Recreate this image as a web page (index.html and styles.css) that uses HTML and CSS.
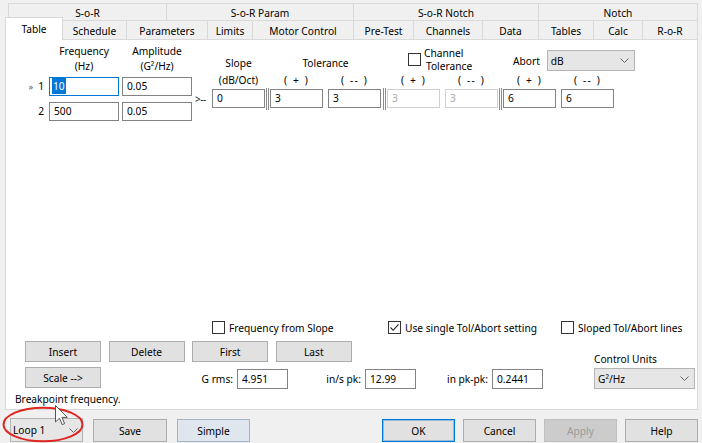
FILE: index.html
```html
<!DOCTYPE html>
<html lang="en">
<head>
<meta charset="utf-8">
<title>Table</title>
<link rel="stylesheet" href="styles.css">
</head>
<body>
<div class="dlg">
  <div class="tabs">
    <div class="trow trow1">
      <div class="tab t-sor">S-o-R</div>
      <div class="tab t-sorp">S-o-R Param</div>
      <div class="tab t-sorn">S-o-R Notch</div>
      <div class="tab t-notch">Notch</div>
    </div>
    <div class="trow trow2">
      <div class="tab sel t-table">Table</div>
      <div class="tab t-sched">Schedule</div>
      <div class="tab t-param">Parameters</div>
      <div class="tab t-limits">Limits</div>
      <div class="tab t-motor">Motor Control</div>
      <div class="tab t-pre">Pre-Test</div>
      <div class="tab t-chan">Channels</div>
      <div class="tab t-data">Data</div>
      <div class="tab t-tables">Tables</div>
      <div class="tab t-calc">Calc</div>
      <div class="tab t-ror">R-o-R</div>
    </div>
  </div>

  <div class="panel">
    <div class="tarea">
      <div class="freq">
        <div class="fhead">
          <div class="fh">Frequency<br>(Hz)</div>
          <div class="fh amp">Amplitude<br>(G²/Hz)</div>
        </div>
        <div class="frow">
          <div class="rl"><span class="cur">»</span>1</div>
          <div class="tb fcol focus"><span class="hl">10</span></div>
          <div class="tb fcol amp">0.05</div>
        </div>
        <div class="frow r2">
          <div class="rl">2</div>
          <div class="tb fcol">500</div>
          <div class="tb fcol amp">0.05</div>
        </div>
      </div>
      <div class="conn">&gt;--</div>
      <div class="tgrid">
        <div class="gl r1 c1">Slope</div>
        <div class="gl r1 c3s">Tolerance</div>
        <div class="chtol r1 c7s"><span class="cb"></span><span class="chtxt"><span class="ln">Channel</span><span class="ln">Tolerance</span></span></div>
        <div class="abort r1 c11s">
          <span class="ablabel">Abort</span>
          <div class="dd dd-abort"><span>dB</span><svg class="chev" width="9" height="5" viewBox="0 0 9 5"><polyline points="0.5,0.5 4.5,4.5 8.5,0.5" fill="none" stroke="#666" stroke-width="1"/></svg></div>
        </div>

        <div class="sl r2 c1">(dB/Oct)</div>
        <div class="sl pm r2 c3">( + )</div>
        <div class="sl pm r2 c5">( -- )</div>
        <div class="sl pm r2 c7">( + )</div>
        <div class="sl pm r2 c9">( -- )</div>
        <div class="sl pm r2 c11">( + )</div>
        <div class="sl pm r2 c13">( -- )</div>

        <div class="tb r3 c1">0</div>
        <div class="sep r3 c2"></div>
        <div class="tb r3 c3">3</div>
        <div class="tb r3 c5">3</div>
        <div class="sep r3 c6"></div>
        <div class="tb tdis r3 c7">3</div>
        <div class="tb tdis r3 c9">3</div>
        <div class="sep r3 c10"></div>
        <div class="tb r3 c11">6</div>
        <div class="tb r3 c13">6</div>
      </div>
    </div>

    <div class="bottom">
      <div class="cbrow">
        <div class="chk w1"><span class="cb"></span><span>Frequency from Slope</span></div>
        <div class="chk w2"><span class="cb"><svg width="11" height="11" viewBox="0 0 11 11"><polyline points="1.5,5.5 4.2,8.3 9.5,2.3" fill="none" stroke="#222" stroke-width="1.1"/></svg></span><span>Use single Tol/Abort setting</span></div>
        <div class="chk"><span class="cb"></span><span>Sloped Tol/Abort lines</span></div>
      </div>
      <div class="mid">
        <div class="midleft">
          <div class="btnrow">
            <div class="btn">Insert</div>
            <div class="btn">Delete</div>
            <div class="btn">First</div>
            <div class="btn">Last</div>
          </div>
          <div class="rowc">
            <div class="btn">Scale --&gt;</div>
            <div class="fld f1"><span class="flabel">G rms:</span><div class="tb num">4.951</div></div>
            <div class="fld f2"><span class="flabel">in/s pk:</span><div class="tb num">12.99</div></div>
            <div class="fld f3"><span class="flabel">in pk-pk:</span><div class="tb num">0.2441</div></div>
          </div>
        </div>
        <div class="midright">
          <div class="culabel">Control Units</div>
          <div class="dd dd-cu"><span>G²/Hz</span><svg class="chev" width="9" height="5" viewBox="0 0 9 5"><polyline points="0.5,0.5 4.5,4.5 8.5,0.5" fill="none" stroke="#666" stroke-width="1"/></svg></div>
        </div>
      </div>
      <div class="status">Breakpoint frequency.</div>
    </div>
  </div>

  <div class="bbar">
    <div class="dd dd-loop"><span>Loop 1</span><svg class="chev" width="9" height="5" viewBox="0 0 9 5"><polyline points="0.5,0.5 4.5,4.5 8.5,0.5" fill="none" stroke="#666" stroke-width="1"/></svg></div>
    <div class="btn bb save">Save</div>
    <div class="btn bb simple">Simple</div>
    <div class="btn bb ok">OK</div>
    <div class="btn bb">Cancel</div>
    <div class="btn bb bdis">Apply</div>
    <div class="btn bb">Help</div>
  </div>
</div>

<svg class="ring" width="84" height="38" viewBox="0 0 84 38"><ellipse cx="41" cy="18.5" rx="39.5" ry="16.8" fill="none" stroke="#e0241f" stroke-width="2"/></svg>
<svg class="cursor" width="14" height="21" viewBox="0 0 14 21"><polygon points="0.5,0.5 0.5,17 4.5,13.2 7.2,19.6 9.6,18.6 7,12.4 12.3,12.4" fill="#fff" stroke="#555" stroke-width="1" stroke-linejoin="round"/></svg>
</body>
</html>
```

FILE: styles.css
```css
* { box-sizing: border-box; }
html, body { margin: 0; padding: 0; }
body {
  width: 702px;
  height: 443px;
  overflow: hidden;
  position: relative;
  background: #f0f0f0;
  font-family: "Noto Sans", "Open Sans", sans-serif;
  font-size: 10.2px;
  color: #000;
}
.dlg { padding-top: 3px; height: 443px; display: flex; flex-direction: column; }

/* tabs */
.trow { display: flex; }
.tab {
  border-top: 1px solid #d9d9d9;
  border-right: 1px solid #d9d9d9;
  background: #f0f0f0;
  display: flex;
  align-items: center;
  justify-content: center;
  white-space: nowrap;
  padding-top: 1px;
}
.trow1 { margin-left: 8px; height: 17px; }
.trow1 .tab:first-child { border-left: 1px solid #d9d9d9; }
.t-sor { width: 159px; }
.t-sorp { width: 187px; }
.t-sorn { width: 185px; }
.t-notch { width: 159px; }

.trow2 { margin-left: 5px; height: 19px; }
.tab.sel {
  background: #fff;
  border-left: 1px solid #d9d9d9;
  margin-top: -3px;
  margin-bottom: -1px;
  position: relative;
  z-index: 2;
  padding-top: 0;
}
.t-table { width: 58px; }
.t-sched { width: 64px; }
.t-param { width: 81px; }
.t-limits { width: 45px; }
.t-motor { width: 101px; }
.t-pre { width: 60px; }
.t-chan { width: 69px; }
.t-data { width: 56px; }
.t-tables { width: 55px; }
.t-calc { width: 49px; }
.t-ror { width: 55px; }

/* panel */
.panel {
  margin-left: 5px;
  width: 693px;
  height: 371px;
  border: 1px solid #d9d9d9;
  background: #fff;
  display: flex;
  flex-direction: column;
  padding-top: 4px;
}
.tarea { display: flex; align-items: flex-start; }

.tb {
  height: 19px;
  border: 1px solid #838383;
  background: #fff;
  padding: 0 4px;
  line-height: 17px;
  white-space: nowrap;
}
.tb.focus { border-color: #0078d7; padding-left: 2px; }
.tb.tdis { border-color: #d0d0d0; color: #a8a8a8; }
.hl { background: #0078d7; color: #fff; padding: 1px 1px 1px 1px; }

.freq { margin-left: 16px; }
.fhead { display: flex; height: 30px; padding-left: 27px; line-height: 15px; }
.fh { width: 70px; text-align: center; white-space: nowrap; }
.amp { margin-left: 3px; }
.frow { display: flex; height: 19px; margin-top: 3px; }
.frow.r2 { margin-top: 6px; }
.rl { width: 27px; text-align: right; padding-right: 5px; line-height: 19px; }
.cur { font-size: 9px; color: #555; margin-right: 5px; }
.fcol { width: 70px; }

.conn { width: 20px; margin-top: 48px; line-height: 14px; padding-left: 3px; font-size: 10px; letter-spacing: -0.5px; color: #222; }

.tgrid {
  display: grid;
  grid-template-columns: 53px 5px 53px 5px 53px 6px 53px 5px 53px 5px 53px 5px 53px;
  grid-template-rows: 28px 17px 19px;
}
.r1 { grid-row: 1; }
.r2 { grid-row: 2; }
.r3 { grid-row: 3; }
.c1 { grid-column: 1; }
.c2 { grid-column: 2; }
.c3 { grid-column: 3; }
.c5 { grid-column: 5; }
.c6 { grid-column: 6; }
.c7 { grid-column: 7; }
.c9 { grid-column: 9; }
.c10 { grid-column: 10; }
.c11 { grid-column: 11; }
.c13 { grid-column: 13; }
.c3s { grid-column: 3 / 6; }
.c7s { grid-column: 7 / 10; }
.c11s { grid-column: 11 / 14; }

.gl { align-self: end; margin-bottom: 2px; line-height: 14px; text-align: center; white-space: nowrap; }
.sl { text-align: center; line-height: 17px; white-space: nowrap; }
.sl.pm { letter-spacing: 1.2px; word-spacing: 1px; }
.sep {
  justify-self: center;
  align-self: center;
  width: 3px;
  height: 22px;
  border-left: 1px solid #8c8c8c;
  border-right: 1px solid #8c8c8c;
}

.cb {
  width: 13px;
  height: 13px;
  border: 1px solid #333;
  background: #fff;
  flex: none;
  display: flex;
  align-items: center;
  justify-content: center;
}
.chtol {
  display: flex;
  align-items: center;
  align-self: end;
  margin-bottom: 0;
  padding-left: 21px;
  white-space: nowrap;
}
.chtxt { display: flex; flex-direction: column; margin-left: 3px; }
.chtxt .ln { display: block; height: 12.5px; line-height: 12px; }
.chtxt .ln + .ln { padding-left: 2px; }

.abort {
  display: flex;
  align-items: center;
  align-self: end;
  justify-self: start;
  padding-left: 10px;
  white-space: nowrap;
  margin-bottom: 1px;
}
.ablabel { margin-right: 7px; padding-top: 1px; }

.dd {
  height: 21px;
  border: 1px solid #b4b4b4;
  background: #e6e6e6;
  display: flex;
  align-items: center;
  justify-content: space-between;
  padding: 0 5px 0 3px;
  white-space: nowrap;
}
.chev { flex: none; }
.dd-abort { width: 88px; }

/* bottom section of panel */
.bottom { margin-top: auto; }
.cbrow { display: flex; height: 13px; padding-left: 206px; }
.chk { display: flex; align-items: center; white-space: nowrap; }
.chk .cb { margin-right: 4px; }
.w1 { width: 176px; }
.w2 { width: 173px; }

.mid { display: flex; align-items: flex-end; margin-top: 7px; }
.midleft { display: flex; flex-direction: column; }
.btnrow { display: flex; gap: 7.6px; padding-left: 19px; }
.btn {
  width: 76px;
  height: 21px;
  border: 1px solid #adadad;
  background: #e1e1e1;
  display: flex;
  align-items: center;
  justify-content: center;
  white-space: nowrap;
  flex: none;
}
.rowc { display: flex; align-items: flex-start; margin-top: 5px; height: 22px; padding-left: 19px; }
.fld { display: flex; align-items: center; justify-content: flex-end; margin-top: 2px; white-space: nowrap; }
.f1 { width: 187px; }
.f2 { width: 128px; }
.f3 { width: 127px; }
.flabel { margin-right: 4px; }
.tb.num { width: 51px; height: 20px; line-height: 18px; }

.midright { margin-left: auto; margin-right: 2px; width: 101px; }
.culabel { line-height: 14px; margin-bottom: 2px; white-space: nowrap; }
.dd-cu { width: 101px; }

.status { margin-top: 3px; line-height: 15px; padding-left: 9px; padding-bottom: 2px; }

/* bottom bar */
.bbar { display: flex; align-items: flex-start; padding: 9px 0 0 10px; }
.dd-loop { width: 73px; height: 24px; margin-top: -1px; padding-left: 2px; padding-right: 4px; }
.bb { width: 73px; height: 23px; }
.save { width: 74px; margin-left: 10px; }
.simple { margin-left: 10px; background: #dfe6ee; border-color: #a3b3c6; }
.ok { margin-left: auto; border-color: #0078d7; box-shadow: inset 0 0 0 1px rgba(0, 120, 215, 0.35); }
.bbar .btn:nth-child(n+5) { margin-left: 8px; }
.bbar .btn:last-child { margin-right: 4px; }
.bdis { background: #cccccc; border-color: #bfbfbf; color: #9a9a9a; }

/* overlays */
.ring { position: absolute; left: 2px; top: 406px; }
.cursor { position: absolute; left: 55px; top: 405px; }
```
